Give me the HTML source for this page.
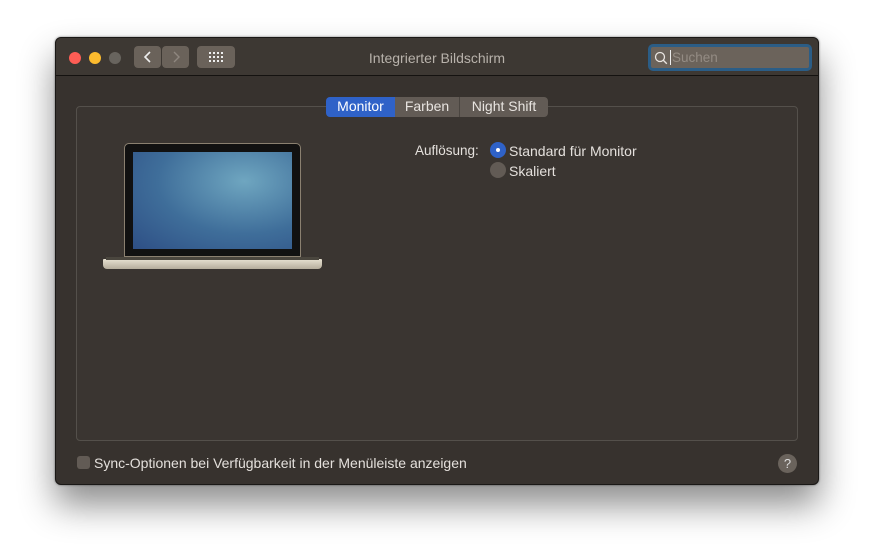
<!DOCTYPE html>
<html><head><meta charset="utf-8"><style>
*{margin:0;padding:0;box-sizing:border-box}
body{width:874px;height:558px;background:#fff;position:relative;overflow:hidden;font-family:"Liberation Sans",sans-serif;font-size:13.5px;color:#e4e0dc}
.win{position:absolute;left:55px;top:37px;width:764px;height:448px;background:#37322e;border:1px solid #1a1816;border-radius:6px;box-shadow:0 20px 35px rgba(0,0,0,.45),0 0 2px rgba(0,0,0,.5);overflow:hidden}
.tb{position:absolute;left:0;top:0;width:100%;height:38px;background:#3d3833;border-bottom:1px solid #141210}
.dot{position:absolute;top:14px;width:12px;height:12px;border-radius:50%}
.btn{position:absolute;top:8px;height:22px;background:#6a625a;border-radius:4px}
.title{position:absolute;left:0;width:100%;top:12px;text-align:center;color:#b8b2ab;font-size:14px}
.search{position:absolute;left:592px;top:6px;width:164px;height:27px;border:3px solid #2b5d86;border-radius:5px;background:#6b635b}
.box{position:absolute;left:20px;top:68px;width:722px;height:335px;border:1px solid #54504b;border-radius:4px;background:#3a3531}
.tabs{position:absolute;left:270px;top:59px;height:20px;display:flex;border-radius:4px;overflow:hidden;font-size:14px}
.tabs div{padding:1px 0;text-align:center;background:#625b55;color:#e8e4e0;border-left:1px solid #4a4540}
.tabs div.on{background:#2f62c8;color:#fff;border:none}
.radio{position:absolute;width:16px;height:16px;border-radius:50%}
</style></head><body>
<div class="win">
 <div class="tb">
  <div class="dot" style="left:13px;background:#fe5d55"></div>
  <div class="dot" style="left:33px;background:#fcbb2e"></div>
  <div class="dot" style="left:53px;background:#68645e"></div>
  <div class="btn" style="left:78px;width:27px"><svg width="27" height="22"><path d="M16 6l-5 5 5 5" stroke="#eee" stroke-width="1.6" fill="none"/></svg></div>
  <div class="btn" style="left:106px;width:27px"><svg width="27" height="22"><path d="M12 6l5 5-5 5" stroke="#8f877f" stroke-width="1.4" fill="none"/></svg></div>
  <div class="btn" style="left:141px;width:38px"><svg width="38" height="22"><g fill="#eee"><rect x="12" y="6" width="2" height="2"/><rect x="16" y="6" width="2" height="2"/><rect x="20" y="6" width="2" height="2"/><rect x="24" y="6" width="2" height="2"/><rect x="12" y="10" width="2" height="2"/><rect x="16" y="10" width="2" height="2"/><rect x="20" y="10" width="2" height="2"/><rect x="24" y="10" width="2" height="2"/><rect x="12" y="14" width="2" height="2"/><rect x="16" y="14" width="2" height="2"/><rect x="20" y="14" width="2" height="2"/><rect x="24" y="14" width="2" height="2"/></g></svg></div>
  <div class="title">Integrierter Bildschirm</div>
  <div class="search"><svg width="20" height="20" style="position:absolute;left:1px;top:1px"><circle cx="8" cy="9" r="4.5" stroke="#e8e4e0" stroke-width="1.3" fill="none"/><path d="M11.3 12.3l3.5 3.5" stroke="#e8e4e0" stroke-width="1.4"/></svg><div style="position:absolute;left:19px;top:3px;width:1px;height:15px;background:#eee"></div><span style="position:absolute;left:21px;top:3px;color:#948c84">Suchen</span></div>
 </div>
 <div class="box"></div>
 <div class="tabs"><div class="on" style="width:69px">Monitor</div><div style="border:none;width:64px">Farben</div><div style="width:89px">Night Shift</div></div>
 <div style="position:absolute;left:68px;top:105px;width:177px;height:114px;background:#111;border:1px solid #8a8070;border-radius:5px 5px 0 0"></div>
 <div style="position:absolute;left:77px;top:114px;width:159px;height:97px;background:radial-gradient(ellipse at 70% 30%,#6fa6c0,#3f6e9a 55%,#2e4f85)"></div>
 <div style="position:absolute;left:47px;top:221px;width:219px;height:10px;background:linear-gradient(#e8e2d2,#b5ad9c);border-radius:1px 1px 4px 4px"></div>
 <div style="position:absolute;left:50px;top:219px;width:213px;height:3px;background:#4a463e"></div>
 <div style="position:absolute;left:359px;top:105px">Auflösung:</div>
 <div class="radio" style="left:434px;top:104px;background:#2f62c8"><div style="position:absolute;left:6px;top:6px;width:4px;height:4px;border-radius:50%;background:#fff"></div></div>
 <div style="position:absolute;left:453px;top:105px;font-size:14px">Standard für Monitor</div>
 <div class="radio" style="left:434px;top:124px;background:#625b55"></div>
 <div style="position:absolute;left:453px;top:125px;font-size:14px">Skaliert</div>
 <div style="position:absolute;left:21px;top:418px;width:13px;height:13px;border-radius:3px;background:#625b55"></div>
 <div style="position:absolute;left:38px;top:417px;font-size:14px">Sync-Optionen bei Verfügbarkeit in der Menüleiste anzeigen</div>
 <div style="position:absolute;left:722px;top:416px;width:19px;height:19px;border-radius:50%;background:#6a635c;color:#ddd;text-align:center;font-size:13px;line-height:19px">?</div>
</div>
</body></html>
